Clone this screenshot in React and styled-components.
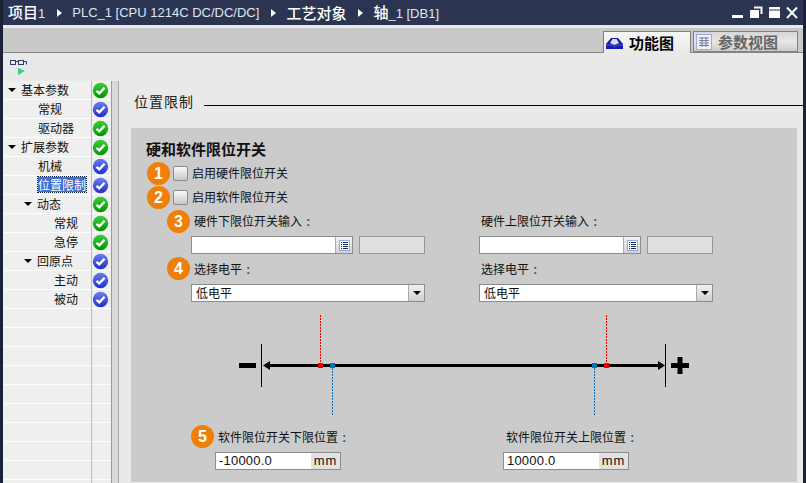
import React from "react";
import styled, { createGlobalStyle } from "styled-components";

const Global = createGlobalStyle`
  html, body { margin: 0; padding: 0; width: 806px; height: 483px; overflow: hidden; background: #e9e9e9; }
  body { font-family: "Noto Sans CJK SC", "Liberation Sans", sans-serif; font-size: 12px; color: #111; }
  * { box-sizing: border-box; }
`;

const Frame = styled.div`
  width: 806px; height: 483px; display: flex; flex-direction: column; overflow: hidden;
  border-left: 3px solid #1b2238; border-right: 3px solid #1b2238;
`;
const TitleBar = styled.div`
  margin: 0 -3px; height: 25px; flex: none; background: #2b3551; color: #fff;
  display: flex; align-items: center; padding: 0 8px; gap: 12px;
`;
const Crumb = styled.span`
  color: #fff; white-space: nowrap; line-height: 25px; font-size: 15px; font-weight: 500;
  font-family: "Noto Sans CJK SC", "Liberation Sans", sans-serif;
`;
const CrumbLatin = styled.span`
  color: #dfe6f2; white-space: nowrap; line-height: 25px; font-size: 13px; font-family: "Liberation Sans", sans-serif;
  font-weight: 400;
`;
const CrumbArrow = styled.span`
  width: 0; height: 0; border-left: 5px solid #fff; border-top: 4px solid transparent; border-bottom: 4px solid transparent; flex: none; margin-right: -2px;
`;
const WinControls = styled.svg` margin-left: auto; margin-right: -1px; flex: none; `;
const TabBar = styled.div`
  height: 28px; flex: none; border-top: 3px solid #e9e9e9; background: #c9c9c9; border-bottom: 1px solid #858585;
  display: flex; justify-content: flex-end; align-items: flex-end; padding-right: 5px; gap: 2px;
`;
const Tab = styled.div`
  height: ${p => p.$active ? "22px" : "21px"}; width: ${p => p.$active ? "88px" : "105px"};
  margin-bottom: ${p => p.$active ? "-1px" : "0"};
  border: 1px solid #808080; border-bottom: ${p => p.$active ? "none" : "1px solid #808080"};
  background: ${p => p.$active ? "linear-gradient(#f7f7f7, #e9e9e9)" : "linear-gradient(#d6d6d6, #e6e6e6 50%, #cdcdcd)"};
  color: ${p => p.$active ? "#000" : "#666"}; font-weight: 700; font-size: 15px;
  display: flex; align-items: center; gap: 6px; padding-left: 2px; line-height: 20px;
`;
const Toolbar = styled.div`
  height: 28px; flex: none; background: #e9e9e9; padding: 6px 0 0 7px;
`;
const Main = styled.div` flex: 1; display: flex; min-height: 0; `;
const Sidebar = styled.div`
  width: 109px; flex: none; display: flex; flex-direction: column; background: #efefef;
  border-right: 1px solid #9a9a9a; overflow: hidden;
`;
const Row = styled.div`
  height: 19px; flex: none; display: flex; border-bottom: 1px solid #fdfdfd;
`;
const TreeCell = styled.div`
  width: 88px; flex: none; display: flex; align-items: center; padding: 0 0 1px ${p => p.$indent}px; white-space: nowrap; line-height: 17px; font-size: 12px;
`;
const StatusCell = styled.div`
  flex: 1; border-left: 1px solid #bcbcbc; display: flex; align-items: center; margin-bottom: -1px; padding-bottom: 1px;
`;
const Caret = styled.span`
  width: 0; height: 0; border-top: 4px solid #000; border-left: 4px solid transparent; border-right: 4px solid transparent; margin-right: 5px; flex: none;
`;
const Selected = styled.span`
  background: #3b6fd2; color: #fff; outline: 1px dotted #0b1a3a; height: 15px; line-height: 15px; display: inline-block;
`;
const Splitter = styled.div`
  width: 7px; flex: none; background: #d9d9d9; border-right: 1px solid #a8a8a8;
`;
const Content = styled.div` flex: 1; min-width: 0; display: flex; flex-direction: column; background: #e9e9e9; `;
const SectionHead = styled.div` height: 47px; flex: none; display: flex; padding: 10px 0 0 15px; `;
const SectionTitle = styled.div` font-size: 14px; line-height: 20px; letter-spacing: 1px; color: #222; `;
const SectionLine = styled.div` flex: 1; height: 1px; background: #000; margin: 14px 0 0 10px; `;
const Panel = styled.div`
  margin: 0 6px 1px 12px; flex: 1; background: #cbcbcb; padding: 12px 0 0; overflow: hidden;
`;
const GroupTitle = styled.div` font-weight: 700; font-size: 15px; line-height: 18px; padding-left: 15px; color: #111; `;
const GroupGap = styled.div` height: 3px; `;
const CheckRow = styled.div` position: relative; height: 24px; display: flex; align-items: center; padding-left: 42px; gap: 4px; line-height: 16px; `;
const CheckBox = styled.span`
  width: 15px; height: 15px; border: 1px solid #8c8c8c; border-radius: 2px; background: linear-gradient(#f8f8f8, #dcdcdc 60%, #c8c8c8); flex: none;
`;
const Badge = styled.span`
  position: absolute; top: ${p => p.$top ?? 0}px; left: ${p => p.$left}px; width: 23px; height: 23px; border-radius: 50%;
  background: #f07f09; color: #fff; font: 700 16px/23px "Liberation Sans", sans-serif; text-align: center;
`;
const Cols = styled.div`
  display: grid; grid-template-columns: 288px 288px; padding-left: ${p => p.$pad ?? 60}px; margin-top: ${p => p.$mt || 0}px;
`;
const Label = styled.div` position: relative; height: 24px; line-height: 24px; padding-left: ${p => p.$inset ?? 3}px; white-space: nowrap; font-size: 12px; color: #111; `;
const Colon = styled.span` color: #1c5c8e; font: 700 13px "Liberation Sans", sans-serif; margin-left: 4px; `;
const InputGroup = styled.div` display: flex; height: 18px; `;
const ConnectField = styled.div`
  width: 162px; height: 18px; border: 1px solid #8c8c8c; background: #fff; display: flex; justify-content: flex-end;
`;
const ListButton = styled.div`
  width: 17px; height: 16px; background: linear-gradient(#f2f2f2, #d4d4d4); border-left: 1px solid #aaa; display: flex; align-items: center; justify-content: center;
`;
const Readout = styled.div` width: 66px; height: 18px; margin-left: 6px; border: 1px solid #979797; background: #e0e0e0; `;
const Select = styled.div`
  width: 234px; height: 18px; border: 1px solid #8c8c8c; background: #fff; display: flex; justify-content: space-between; padding-left: 4px; line-height: 16px; font-size: 12px;
`;
const SelectArrow = styled.div`
  width: 16px; height: 16px; background: linear-gradient(#f2f2f2, #cfcfcf); border-left: 1px solid #aaa; display: flex; align-items: center; justify-content: center;
  &::after { content: ""; border-top: 4px solid #000; border-left: 4px solid transparent; border-right: 4px solid transparent; }
`;
const Diagram = styled.svg` display: block; margin-top: 13px; `;
const LimitField = styled.div`
  width: 126px; height: 18px; border: 1px solid #8c8c8c; background: #fff; display: flex; margin-top: 3px;
  font: 13px/16px "Liberation Sans", sans-serif; letter-spacing: 0.2px;
`;
const LimitValue = styled.div` flex: 1; padding-left: 3px; color: #111; `;
const LimitUnit = styled.div` width: 29px; background: #e2e2e2; text-align: center; letter-spacing: 0.8px; `;

const tree = [
  { t: "基本参数", i: 5, c: 1, s: "g" }, { t: "常规", i: 35, s: "b" }, { t: "驱动器", i: 35, s: "g" },
  { t: "扩展参数", i: 5, c: 1, s: "g" }, { t: "机械", i: 35, s: "b" }, { t: "位置限制", i: 35, s: "b", sel: 1 },
  { t: "动态", i: 21, c: 1, s: "g" }, { t: "常规", i: 51, s: "g" }, { t: "急停", i: 51, s: "g" },
  { t: "回原点", i: 21, c: 1, s: "b" }, { t: "主动", i: 51, s: "b" }, { t: "被动", i: 51, s: "b" },
];

const Status = ({ kind, id }) => (
  <svg width="17" height="17" viewBox="0 0 17 17">
    <defs>
      <linearGradient id={id} x1="0" y1="0" x2="0" y2="1">
        <stop offset="0" stopColor={kind === "g" ? "#3ccf3c" : "#6f7df0"} />
        <stop offset="1" stopColor={kind === "g" ? "#009400" : "#1c2fce"} />
      </linearGradient>
    </defs>
    <circle cx="8.5" cy="8.5" r="7.7" fill={`url(#${id})`} />
    <path d="M4.5 8.8 L7.3 11.4 L12.6 5.8" fill="none" stroke="#fff" strokeWidth="2.4" />
  </svg>
);

const ListIcon = () => (
  <svg width="11" height="11" viewBox="0 0 11 11">
    <rect x=".5" y=".5" width="10" height="10" fill="#fff" stroke="#9aa8e8" />
    <path d="M2 2.5h1M4 2.5h5M2 4.5h1M4 4.5h5M2 6.5h1M4 6.5h5M2 8.5h1M4 8.5h5" stroke="#1a2a5a" />
  </svg>
);

export default function App() {
  return (
    <Frame>
      <Global />
      <TitleBar>
        <Crumb>项目<CrumbLatin>1</CrumbLatin></Crumb><CrumbArrow />
        <CrumbLatin>PLC_1 [CPU 1214C DC/DC/DC]</CrumbLatin><CrumbArrow />
        <Crumb>工艺对象</Crumb><CrumbArrow />
        <Crumb>轴<CrumbLatin>_1 [DB1]</CrumbLatin></Crumb>
        <WinControls width="67" height="14" viewBox="0 0 67 14">
          <rect x="0" y="9" width="11" height="3" fill="#fff" />
          <rect x="18" y="4" width="9" height="8" fill="#fff" />
          <path d="M22 1.5h7.5V8" fill="none" stroke="#fff" strokeWidth="2" />
          <rect x="37" y="1" width="11" height="2.5" fill="#fff" />
          <rect x="37" y="4.5" width="11" height="7.5" fill="#fff" />
          <path d="M55 1.5 L65 12 M65 1.5 L55 12" stroke="#fff" strokeWidth="2" />
        </WinControls>
      </TitleBar>
      <TabBar>
        <Tab $active>
          <svg width="17" height="15" viewBox="0 0 17 15">
            <path d="M0 14 V9 L5 3 H12 L17 9 V14 Z" fill="#1a1aa8" />
            <path d="M4 8 L6.5 4 H10.5 L13 8 L8.5 10 Z" fill="#d8e0f8" />
            <path d="M0 10 H6 L8.5 12 L11 10 H17" fill="none" stroke="#3f5ce8" />
          </svg>
          功能图
        </Tab>
        <Tab>
          <svg width="16" height="16" viewBox="0 0 16 16">
            <rect x=".5" y=".5" width="15" height="15" fill="#eef0fb" stroke="#9aa8e8" />
            <path d="M3 4h10M3 6.5h10M3 9h10M3 11.5h10M6 3v10M10 3v10" stroke="#7a7a96" />
          </svg>
          参数视图
        </Tab>
      </TabBar>
      <Toolbar>
        <svg width="18" height="22" viewBox="0 0 18 22">
          <rect x=".5" y="1.5" width="5" height="4" fill="none" stroke="#2a3a66" />
          <rect x="8.5" y="1.5" width="5" height="4" fill="none" stroke="#2a3a66" />
          <path d="M5.5 2.5h3M13.5 2.5h3v3" fill="none" stroke="#2a3a66" />
          <path d="M8 9 L15 12 L8 16 Z" fill="#3ad07a" />
        </svg>
      </Toolbar>
      <Main>
        <Sidebar>
          {tree.map((r, i) => (
            <Row key={i}>
              <TreeCell $indent={r.i}>
                {r.c && <Caret />}
                {r.sel ? <Selected>{r.t}</Selected> : r.t}
              </TreeCell>
              <StatusCell><Status kind={r.s} id={`st${i}`} /></StatusCell>
            </Row>
          ))}
          {Array.from({ length: 10 }, (_, i) => (
            <Row key={`e${i}`}><TreeCell $indent={0} /><StatusCell /></Row>
          ))}
        </Sidebar>
        <Splitter />
        <Content>
          <SectionHead>
            <SectionTitle>位置限制</SectionTitle>
            <SectionLine />
          </SectionHead>
          <Panel>
            <GroupTitle>硬和软件限位开关</GroupTitle>
            <GroupGap />
            <CheckRow><Badge $left={16} $top={1}>1</Badge><CheckBox />启用硬件限位开关</CheckRow>
            <CheckRow><Badge $left={16} $top={1}>2</Badge><CheckBox />启用软件限位开关</CheckRow>
            <Cols>
              <Label><Badge $left={-24} $top={1}>3</Badge>硬件下限位开关输入<Colon>:</Colon></Label>
              <Label $inset={2}>硬件上限位开关输入<Colon>:</Colon></Label>
            </Cols>
            <Cols $mt={3}>
              <InputGroup><ConnectField><ListButton><ListIcon /></ListButton></ConnectField><Readout /></InputGroup>
              <InputGroup><ConnectField><ListButton><ListIcon /></ListButton></ConnectField><Readout /></InputGroup>
            </Cols>
            <Cols $mt={3}>
              <Label><Badge $left={-24} $top={0}>4</Badge>选择电平<Colon>:</Colon></Label>
              <Label $inset={2}>选择电平<Colon>:</Colon></Label>
            </Cols>
            <Cols $mt={3}>
              <Select>低电平<SelectArrow /></Select>
              <Select>低电平<SelectArrow /></Select>
            </Cols>
            <Diagram width="666" height="100" viewBox="0 0 666 100">
              <rect x="108" y="48" width="17" height="5" fill="#000" />
              <rect x="130" y="29" width="1" height="43" fill="#000" />
              <rect x="534" y="29" width="1" height="43" fill="#000" />
              <rect x="136" y="49" width="392" height="3" fill="#000" />
              <path d="M132 50.5 L139 46 V55 Z M534 50.5 L527 46 V55 Z" fill="#000" />
              <path d="M540 48h6.5v-6h5v6h6.5v5h-6.5v6h-5v-6h-6.5z" fill="#000" />
              <line x1="189.5" y1="0" x2="189.5" y2="48" stroke="#f00000" strokeDasharray="2 1" />
              <line x1="475.5" y1="0" x2="475.5" y2="48" stroke="#f00000" strokeDasharray="2 1" />
              <line x1="201.5" y1="53" x2="201.5" y2="100" stroke="#0a72c0" strokeDasharray="2 1" />
              <line x1="463.5" y1="53" x2="463.5" y2="100" stroke="#0a72c0" strokeDasharray="2 1" />
              <rect x="187" y="48" width="5" height="5" fill="#f00000" />
              <rect x="473" y="48" width="5" height="5" fill="#f00000" />
              <rect x="199" y="48" width="5" height="5" fill="#0a72c0" />
              <rect x="461" y="48" width="5" height="5" fill="#0a72c0" />
            </Diagram>
            <Cols $pad={84} $mt={10}>
              <Label><Badge $left={-24} $top={0}>5</Badge>软件限位开关下限位置<Colon>:</Colon></Label>
              <Label>软件限位开关上限位置<Colon>:</Colon></Label>
            </Cols>
            <Cols $pad={84}>
              <LimitField><LimitValue>-10000.0</LimitValue><LimitUnit>mm</LimitUnit></LimitField>
              <LimitField><LimitValue>10000.0</LimitValue><LimitUnit>mm</LimitUnit></LimitField>
            </Cols>
          </Panel>
        </Content>
      </Main>
    </Frame>
  );
}
